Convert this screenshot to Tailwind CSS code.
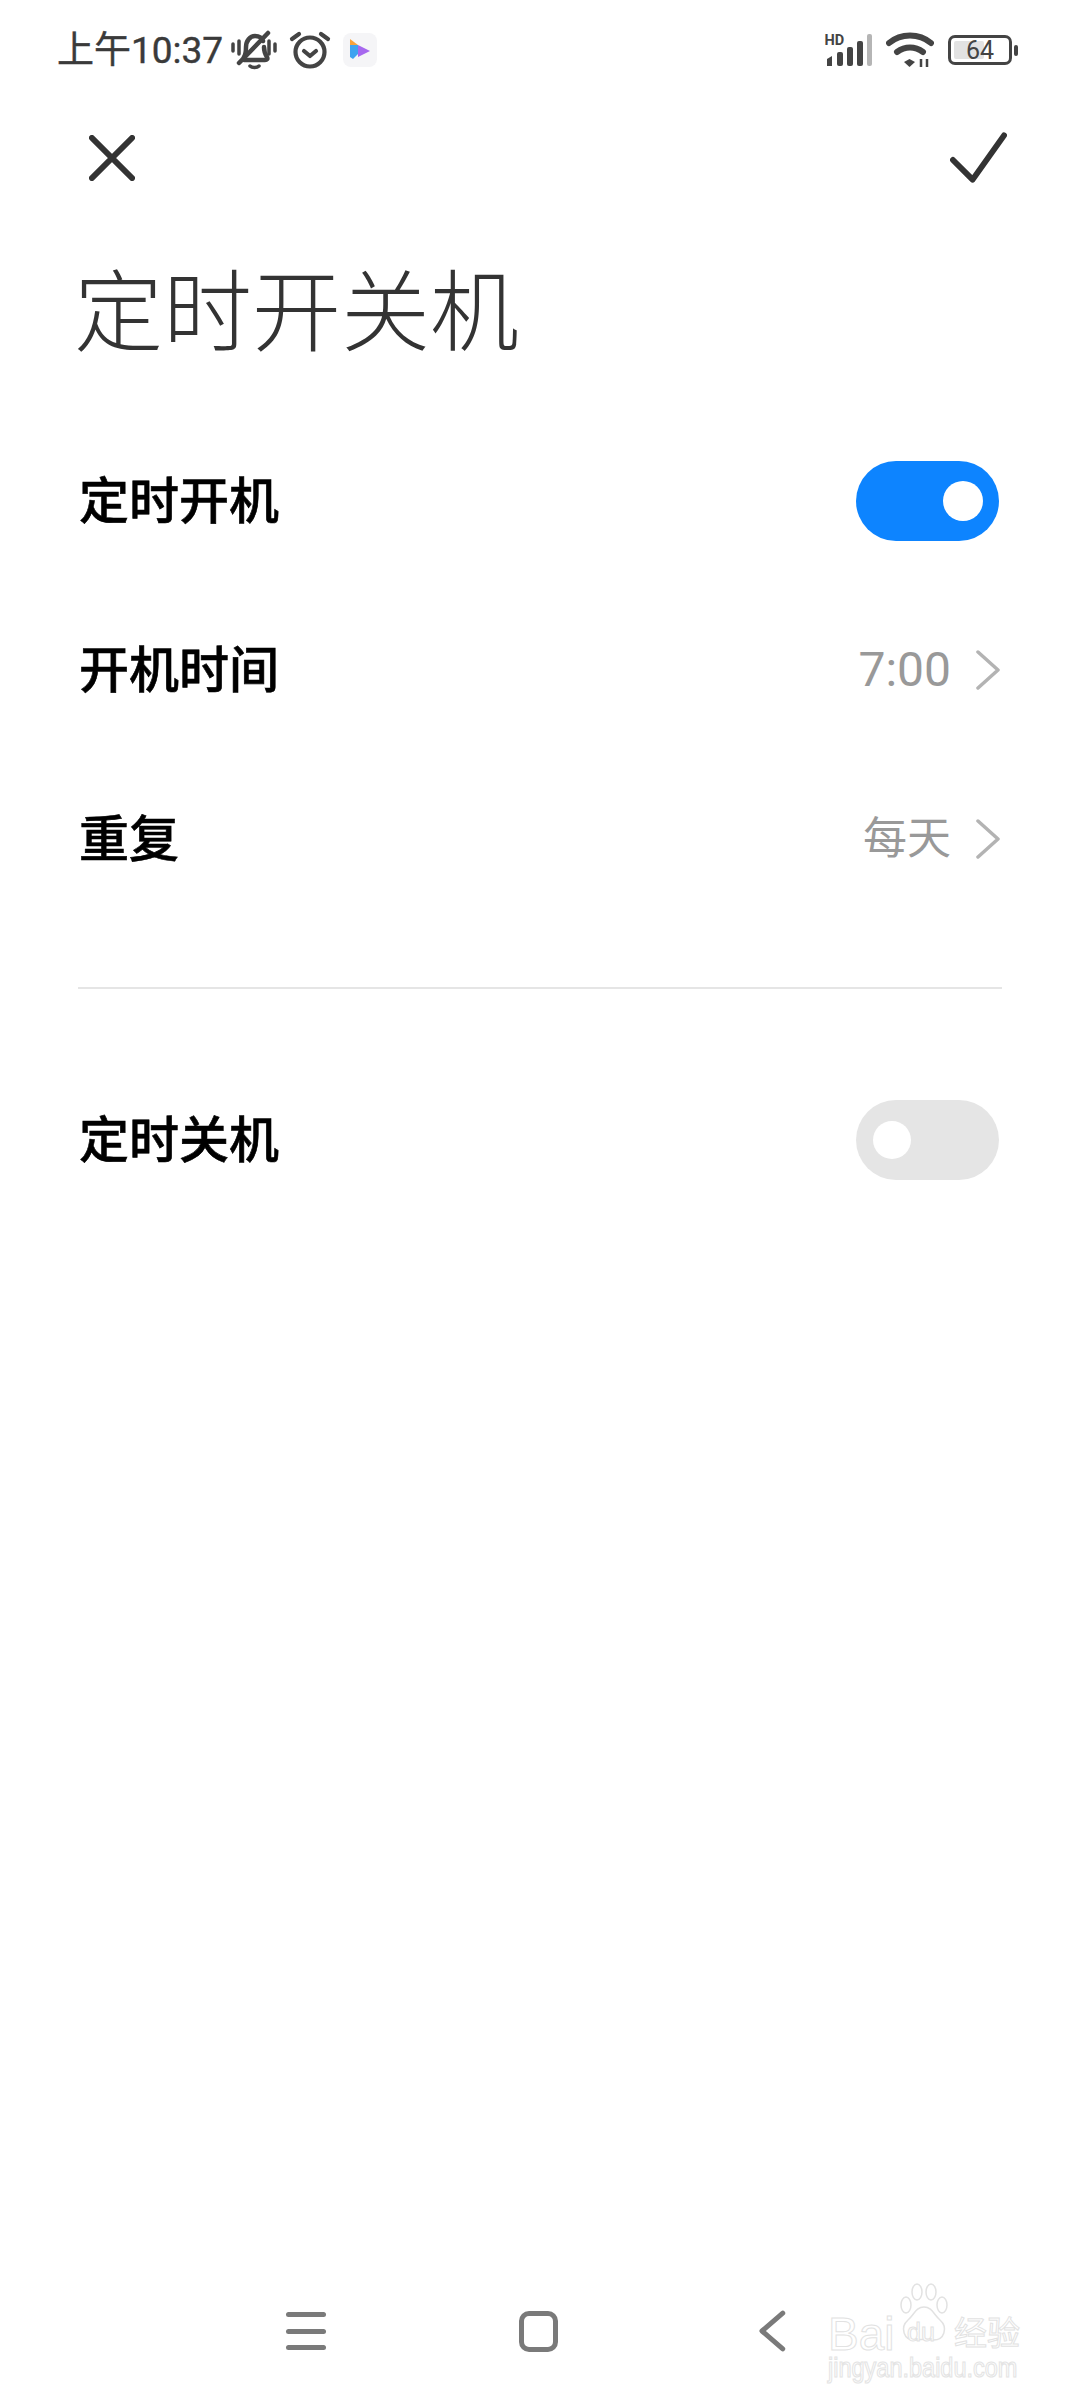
<!DOCTYPE html>
<html lang="zh-CN">
<head>
    <meta charset="UTF-8">
    <title>定时开关机</title>
    <script src="https://cdn.jsdelivr.net/npm/@tailwindcss/browser@4"></script>
</head>
<body class="bg-white">
    <div class="relative w-[1080px] h-[2400px] flex flex-col bg-white font-['Roboto','Noto_Sans_CJK_SC',sans-serif]">
        <!-- Status bar -->
        <div class="h-[100px] pl-[57px] pr-[62px] flex items-center justify-between text-[#3a3a3a]">
            <div class="flex items-center">
                <span class="text-[37px] leading-none w-[174px] whitespace-nowrap [-webkit-text-stroke:0.4px_#3a3a3a]">上午10:37</span>
                <svg class="w-[46px] h-[40px]" viewBox="0 0 46 40" fill="none" stroke="#444" stroke-width="4.500" stroke-linecap="round" stroke-linejoin="round">
                    <path d="M2 14v7M8 11v13M44 14v7M38 11v13" stroke-width="3.500"/>
                    <path d="M13 27c2-3 2-6 2-10 0-6 4-11 9-11 4 0 7 2 8 5M33 17c0 4 1 7 3 10 1 2 0 3-2 3H13"/>
                    <path d="M8 33 37 3"/>
                    <path d="M19 36c2 2 7 2 9 0" stroke-width="3.500"/>
                </svg>
                <svg class="w-[42px] h-[38px] ml-[12px]" viewBox="0 0 42 38" fill="none" stroke="#444" stroke-width="4.200" stroke-linecap="round" stroke-linejoin="round">
                    <circle cx="21" cy="21" r="14.500"/>
                    <path d="M15 20l6 5 6-5"/>
                    <path d="M3 8l7-5M39 8l-7-5"/>
                </svg>
                <div class="w-[34px] h-[34px] ml-[12px] rounded-[8px] bg-[#f5f5f7] flex items-center justify-center">
                    <svg class="w-[22px] h-[24px]" viewBox="0 0 22 24">
                        <path d="M1 1l8 6-8 0z" fill="#f9a23b"/>
                        <path d="M1 7h8v9l-5 5-3-2z" fill="#3fa3f0"/>
                        <path d="M9 7l12 6-12 6z" fill="#a668ee"/>
                    </svg>
                </div>
            </div>
            <div class="flex items-center">
                <svg class="w-[50px] h-[34px]" viewBox="0 0 50 34">
                    <text x="0.500" y="12" font-size="14.500" font-weight="700" fill="#444" font-family="Roboto">HD</text>
                    <path d="M3 26l5-3v10H3z" fill="#444"/>
                    <rect x="13" y="19" width="6" height="14" rx="2" fill="#444"/>
                    <rect x="23" y="14" width="6" height="19" rx="2" fill="#444"/>
                    <rect x="33" y="8" width="6" height="25" rx="2" fill="#444"/>
                    <rect x="43" y="1" width="5" height="32" rx="2" fill="#b5b5b5"/>
                </svg>
                <svg class="w-[48px] h-[36px] ml-[12px]" viewBox="0 0 48 36" fill="none" stroke="#444" stroke-width="6" stroke-linecap="round">
                    <path d="M3 11c12-10 30-10 42 0"/>
                    <path d="M11 20c8-6 18-6 26 0"/>
                    <path d="M18 30l5.500 5 5.500-5-5.500-3z" fill="#444" stroke="none"/>
                    <path d="M35 27v8M41 27v8" stroke-width="2.500" stroke-linecap="butt"/>
                </svg>
                <div class="ml-[14px] w-[64px] h-[30px] rounded-[7px] border-[3px] border-[#444] p-[3px] relative">
                    <div class="w-[30px] h-full rounded-[2px] bg-[#e2e2e2]"></div>
                    <span class="absolute inset-0 flex items-center justify-center text-[25px] leading-none text-[#444]">64</span>
                </div>
                <div class="ml-[2px] w-[4px] h-[11px] rounded-[2px] bg-[#444]"></div>
            </div>
        </div>

        <!-- Action bar -->
        <div class="h-[58px] mt-[29px] pl-[89px] pr-[73px] flex items-center justify-between">
            <svg class="w-[46px] h-[46px]" viewBox="0 0 48 48" fill="none" stroke="#333" stroke-width="6" stroke-linecap="round">
                <path d="M3 3l42 42M45 3 3 45"/>
            </svg>
            <svg class="w-[57px] h-[52px]" viewBox="0 0 58 52" fill="none" stroke="#333" stroke-width="6" stroke-linecap="round" stroke-linejoin="round">
                <path d="M3 28l20 20L55 3"/>
            </svg>
        </div>

        <!-- Title -->
        <h1 class="mt-[77px] pl-[74px] text-[89px] leading-[100px] font-light text-[#333]">定时开关机</h1>

        <!-- Settings rows -->
        <div class="mt-[97px] pl-[79px] pr-[81px] flex items-center justify-between h-[80px]">
            <span class="pt-[3px] text-[50px] font-medium text-black [-webkit-text-stroke:0.6px_#000]">定时开机</span>
            <div class="w-[143px] h-[80px] rounded-full bg-[#0d84ff] flex items-center justify-end pr-[16px]">
                <div class="w-[40px] h-[40px] rounded-full bg-white"></div>
            </div>
        </div>
        <div class="mt-[89px] pl-[79px] pr-[80px] flex items-center justify-between h-[80px]">
            <span class="pt-[3px] text-[50px] font-medium text-black [-webkit-text-stroke:0.6px_#000]">开机时间</span>
            <div class="flex items-center text-[#999]">
                <span class="text-[48px]">7:00</span>
                <svg class="ml-[25px] w-[24px] h-[40px]" viewBox="0 0 24 40" fill="none" stroke="#b3b3b3" stroke-width="3.500" stroke-linecap="round" stroke-linejoin="round">
                    <path d="M2 2l20 18L2 38"/>
                </svg>
            </div>
        </div>
        <div class="mt-[89px] pl-[79px] pr-[80px] flex items-center justify-between h-[80px]">
            <span class="pt-[3px] text-[50px] font-medium text-black [-webkit-text-stroke:0.6px_#000]">重复</span>
            <div class="flex items-center text-[#999]">
                <span class="text-[44px]">每天</span>
                <svg class="ml-[25px] w-[24px] h-[40px]" viewBox="0 0 24 40" fill="none" stroke="#b3b3b3" stroke-width="3.500" stroke-linecap="round" stroke-linejoin="round">
                    <path d="M2 2l20 18L2 38"/>
                </svg>
            </div>
        </div>

        <div class="mt-[108px] mx-[78px] h-[2px] bg-[#e5e5e5]"></div>

        <div class="mt-[111px] pl-[79px] pr-[81px] flex items-center justify-between h-[80px]">
            <span class="pt-[3px] text-[50px] font-medium text-black [-webkit-text-stroke:0.6px_#000]">定时关机</span>
            <div class="w-[143px] h-[80px] rounded-full bg-[#e5e5e5] flex items-center pl-[17px]">
                <div class="w-[38px] h-[38px] rounded-full bg-white"></div>
            </div>
        </div>

        <!-- Navigation bar -->
        <div class="mt-auto mb-[48px] ml-[286px] w-[500px] h-[42px] flex items-center">
            <div class="w-[40px] h-[38px] flex flex-col justify-between">
                <div class="h-[5px] rounded-full bg-[#7a7a7a]"></div>
                <div class="h-[5px] rounded-full bg-[#7a7a7a]"></div>
                <div class="h-[5px] rounded-full bg-[#7a7a7a]"></div>
            </div>
            <div class="ml-[193px] w-[40px] h-[41px] rounded-[10px] border-[5px] border-[#7a7a7a]"></div>
            <svg class="ml-[200px] w-[28px] h-[42px]" viewBox="0 0 28 42" fill="none" stroke="#7a7a7a" stroke-width="5" stroke-linecap="round" stroke-linejoin="round">
                <path d="M25 3 4 21l21 18"/>
            </svg>
        </div>

        <!-- Watermark -->
        <div class="absolute left-[828px] top-[2283px] w-[196px] h-[95px]">
            <span class="absolute left-0 top-[36px] text-[46px] leading-[30px] font-['Liberation_Sans',sans-serif] text-white [-webkit-text-stroke:1px_#e2e2e2]">Bai</span>
            <svg class="absolute left-[66px] top-0 w-[60px] h-[62px]" viewBox="0 0 60 62" fill="none" stroke="#e2e2e2" stroke-width="1.500">
                <ellipse cx="12" cy="22" rx="5" ry="8"/>
                <ellipse cx="23" cy="9" rx="5" ry="8"/>
                <ellipse cx="37" cy="9" rx="5" ry="8"/>
                <ellipse cx="48" cy="22" rx="5" ry="8"/>
                <path d="M30 24c-8 0-10 8-16 13-8 7-5 21 8 20 5 0 11-2 16 0 13 1 16-13 8-20-6-5-8-13-16-13z"/>
            </svg>
            <span class="absolute left-[79px] top-[37px] text-[25px] leading-[24px] font-['Liberation_Sans',sans-serif] text-white [-webkit-text-stroke:1px_#e2e2e2]">du</span>
            <span class="absolute left-[126px] top-[36px] text-[33px] leading-[30px] whitespace-nowrap text-white [-webkit-text-stroke:1px_#e2e2e2]">经验</span>
            <span class="absolute left-0 top-[72px] text-[23.500px] leading-[20px] whitespace-nowrap font-['Liberation_Sans',sans-serif] text-white scale-y-[1.200] origin-top-left [-webkit-text-stroke:1px_#e4e4e4]">jingyan.baidu.com</span>
        </div>
    </div>
</body>
</html>
